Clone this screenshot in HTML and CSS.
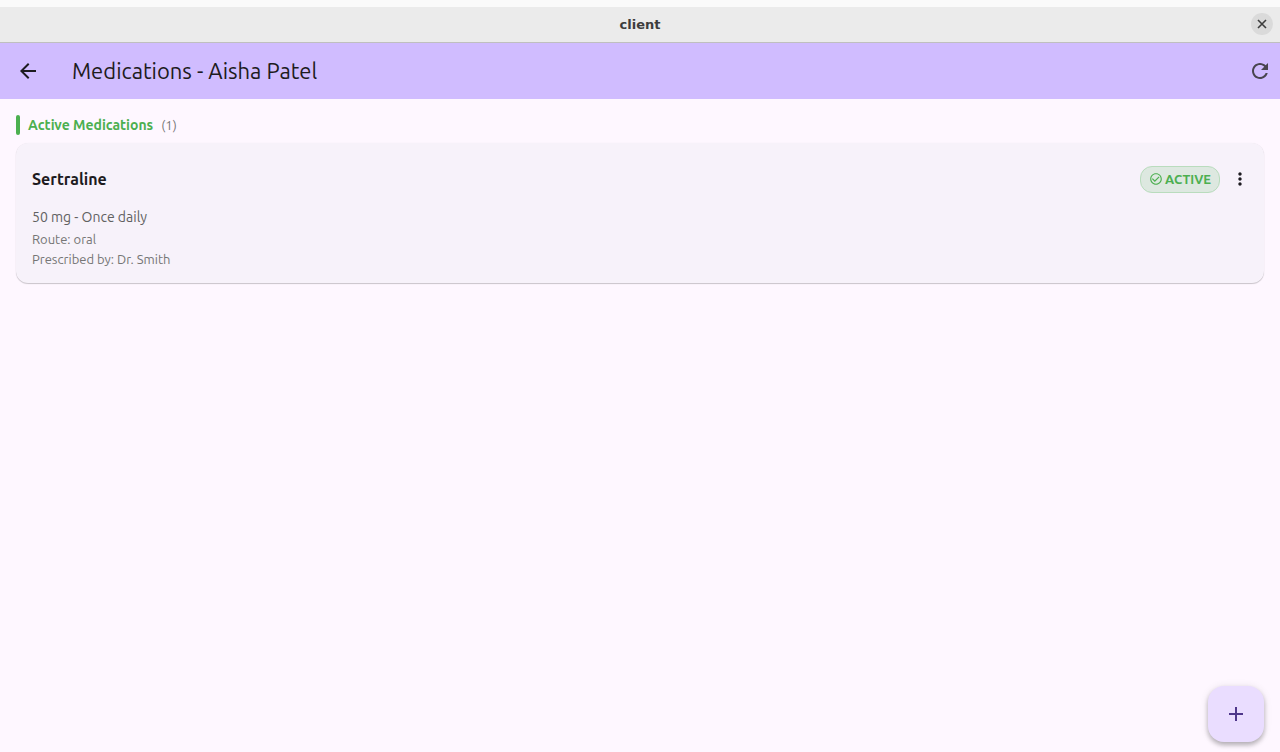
FILE: index.html
```html
<!DOCTYPE html>
<html lang="en">
<head>
    <meta charset="UTF-8">
    <meta name="viewport" content="width=device-width, initial-scale=1.0">
    <title>client</title>
    <link rel="stylesheet" href="styles.css">
</head>
<body>
    <div class="titlebar">
        <span class="window-title">client</span>
        <button type="button" class="window-close" aria-label="Close">
            <svg width="10" height="10" viewBox="0 0 10 10"><path d="M1 1l8 8M9 1L1 9" stroke="currentColor" stroke-width="1.6" fill="none"/></svg>
        </button>
    </div>

    <header class="appbar">
        <button type="button" class="icon-button" aria-label="Back">
            <svg width="24" height="24" viewBox="0 0 24 24" fill="currentColor"><path d="M20 11H7.83l5.59-5.59L12 4l-8 8 8 8 1.41-1.41L7.83 13H20v-2z"/></svg>
        </button>
        <h1>Medications - Aisha Patel</h1>
        <button type="button" class="icon-button refresh" aria-label="Refresh">
            <svg width="24" height="24" viewBox="0 0 24 24" fill="currentColor"><path d="M17.65 6.35C16.2 4.9 14.21 4 12 4c-4.42 0-7.99 3.58-7.99 8s3.57 8 7.99 8c3.73 0 6.84-2.55 7.73-6h-2.08c-.82 2.33-3.04 4-5.65 4-3.31 0-6-2.69-6-6s2.69-6 6-6c1.66 0 3.14.69 4.22 1.78L13 11h7V4l-2.35 2.35z"/></svg>
        </button>
    </header>

    <main>
        <div class="section-header">
            <h2>Active Medications</h2>
            <span class="count">(1)</span>
        </div>

        <article class="card">
            <div class="card-header">
                <h3>Sertraline</h3>
                <span class="badge">
                    <svg width="14" height="14" viewBox="0 0 24 24" fill="currentColor"><path d="M16.59 7.58L10 14.17l-3.59-3.58L5 12l5 5 8-8zM12 2C6.48 2 2 6.48 2 12s4.48 10 10 10 10-4.48 10-10S17.52 2 12 2zm0 18c-4.42 0-8-3.58-8-8s3.58-8 8-8 8 3.58 8 8-3.58 8-8 8z"/></svg>
                    ACTIVE
                </span>
                <button type="button" class="icon-button" aria-label="More options">
                    <svg width="20" height="20" viewBox="0 0 24 24" fill="currentColor"><path d="M12 8c1.1 0 2-.9 2-2s-.9-2-2-2-2 .9-2 2 .9 2 2 2zm0 2c-1.1 0-2 .9-2 2s.9 2 2 2 2-.9 2-2-.9-2-2-2zm0 6c-1.1 0-2 .9-2 2s.9 2 2 2 2-.9 2-2-.9-2-2-2z"/></svg>
                </button>
            </div>
            <p class="dosage">50 mg - Once daily</p>
            <p class="detail">Route: oral</p>
            <p class="detail">Prescribed by: Dr. Smith</p>
        </article>
    </main>

    <button type="button" class="fab" aria-label="Add medication">
        <svg width="24" height="24" viewBox="0 0 24 24" fill="currentColor"><path d="M19 13h-6v6h-2v-6H5v-2h6V5h2v6h6v2z"/></svg>
    </button>
</body>
</html>
```
FILE: styles.css
```css
* {
    margin: 0;
    padding: 0;
    box-sizing: border-box;
}

body {
    min-height: 100vh;
    background: #fef7ff;
    color: #1d1b20;
    font-family: Ubuntu, "Noto Sans", sans-serif;
}

button {
    border: none;
    background: none;
    color: inherit;
    cursor: pointer;
}

svg {
    display: block;
    flex-shrink: 0;
}

/* Window title bar */
.titlebar {
    display: grid;
    grid-template-columns: 1fr auto 1fr;
    align-items: center;
    height: 43px;
    padding: 0 7px 1px;
    border-top: 7px solid #fafafa;
    border-bottom: 1px solid #bfbfbf;
    background: #ebebeb;
}

.window-title {
    grid-column: 2;
    color: #3d3d3d;
    font-family: "DejaVu Sans", sans-serif;
    font-size: 13px;
    font-weight: bold;
}

.window-close {
    display: flex;
    justify-content: center;
    align-items: center;
    justify-self: end;
    width: 22px;
    height: 22px;
    border-radius: 50%;
    background: #dadada;
    color: #3d3d3d;
}

/* App bar */
.appbar {
    display: flex;
    align-items: center;
    gap: 24px;
    height: 56px;
    padding: 0 0 0 8px;
    background: #d0bcff;
}

.appbar h1 {
    flex: 1;
    font-size: 22px;
    font-weight: 400;
    line-height: 28px;
}

.icon-button {
    display: flex;
    justify-content: center;
    align-items: center;
    width: 40px;
    height: 40px;
    border-radius: 50%;
}

.refresh {
    color: #49454f;
}

main {
    padding: 16px;
}

.section-header {
    display: flex;
    align-items: center;
    gap: 8px;
    margin-bottom: 8px;
}

.section-header::before {
    content: "";
    width: 4px;
    height: 20px;
    border-radius: 2px;
    background: #4caf50;
}

.section-header h2 {
    color: #4caf50;
    font-size: 14px;
    font-weight: bold;
    line-height: 20px;
}

.count {
    color: #757575;
    font-size: 13px;
    line-height: 16px;
}

/* Medication card */
.card {
    padding: 16px 4px 16px 16px;
    border-radius: 12px;
    background: #f7f2fa;
    box-shadow: 0 1px 1px rgba(0, 0, 0, 0.2), 0 0 1px rgba(0, 0, 0, 0.08);
}

.card-header {
    display: flex;
    align-items: center;
    margin-bottom: 8px;
}

.card-header h3 {
    flex: 1;
    font-size: 16px;
    font-weight: bold;
    line-height: 24px;
}

.badge {
    display: flex;
    align-items: center;
    gap: 2px;
    padding: 4px 8px;
    border: 1px solid #b9dcbd;
    border-radius: 12px;
    background: #dde8e0;
    color: #4caf50;
    font-size: 13px;
    font-weight: bold;
    line-height: 17px;
}

.dosage {
    color: #616161;
    font-size: 14px;
    line-height: 20px;
}

.detail {
    margin-top: 4px;
    color: #757575;
    font-size: 13px;
    line-height: 16px;
}

.fab {
    display: flex;
    justify-content: center;
    align-items: center;
    position: fixed;
    right: 16px;
    bottom: 10px;
    width: 56px;
    height: 56px;
    border-radius: 16px;
    background: #eaddff;
    color: #4f378b;
    box-shadow: 0 3px 5px rgba(0, 0, 0, 0.26), 0 1px 8px rgba(0, 0, 0, 0.1);
}
```
